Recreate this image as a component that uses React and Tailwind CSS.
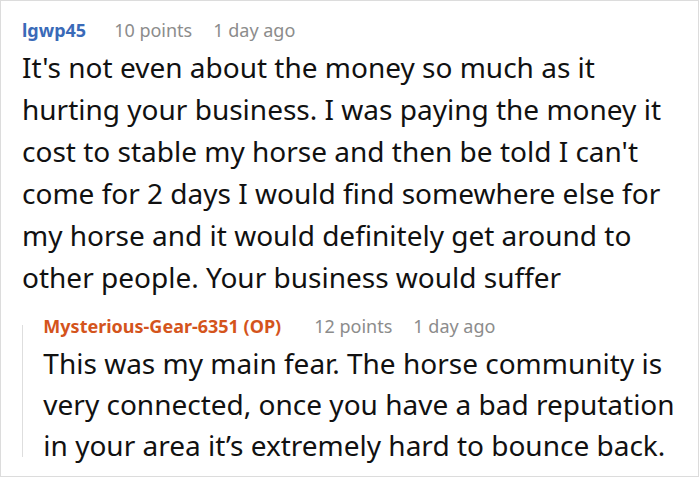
export default function App() {
  return (
    <div
      className="w-[699px] h-[477px] bg-white border border-[#dcdcdc] box-border overflow-hidden"
      style={{ fontFamily: '"Noto Sans", "Open Sans", sans-serif' }}>
      <div className="pl-[21px] pt-[16px] w-[688px]">
        <div className="flex items-baseline text-[18px] leading-[26px]">
          <span className="font-bold text-[#3a6ab8]">lgwp45</span>
          <span className="ml-[28px] text-[#8c8c8c]">10 points</span>
          <span className="ml-[21px] text-[#8c8c8c]">1 day ago</span>
        </div>
        <p className="mt-[3px] text-[28px] leading-[42px] text-[#111]">
          It's not even about the money so much as it hurting your business. I was paying the money it cost to stable my
          horse and then be told I can't come for 2 days I would find somewhere else for my horse and it would definitely
          get around to other people. Your business would suffer
        </p>
        <div className="mt-[15px] flex">
          <div className="w-px bg-[#dedede] mt-[12px] mb-[9px]"></div>
          <div className="pl-[21px]">
            <div className="flex items-baseline text-[18px] leading-[26px]">
              <span className="font-bold text-[#d4541c]">Mysterious-Gear-6351 (OP)</span>
              <span className="ml-[33px] text-[#8c8c8c]">12 points</span>
              <span className="ml-[21px] text-[#8c8c8c]">1 day ago</span>
            </div>
            <p className="mt-[4px] text-[28px] leading-[41px] text-[#111]">
              This was my main fear. The horse community is very connected, once you have a bad reputation in your area
              it’s extremely hard to bounce back.
            </p>
          </div>
        </div>
      </div>
    </div>
  );
}
